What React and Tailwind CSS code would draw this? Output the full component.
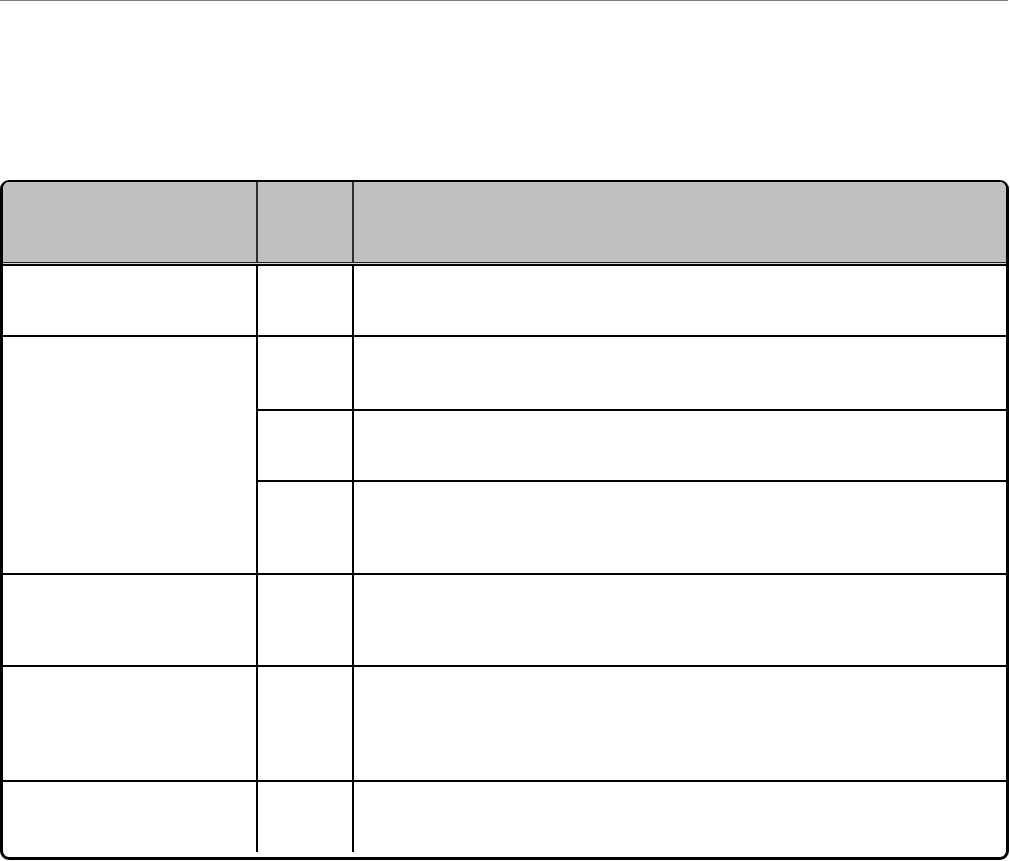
import React from 'react';

const Cell = ({ className = '' }) => <div className={`border-r-2 border-black ${className}`} />;

const App = () => {
  return (
    <div className="min-h-screen bg-white font-['Liberation_Sans',sans-serif]">
      <div className="h-px w-[1008px] bg-[#808080]" />
      <div className="mt-[179px] w-[1009px] h-[680px] border-[3px] border-t-2 border-black rounded-[9px] overflow-hidden flex flex-col">
        {/* header */}
        <div className="flex h-[80px] bg-[#c0c0c0]">
          <div className="w-[255px] shrink-0 border-r-2 border-[#303030]" />
          <div className="w-[96px] shrink-0 border-r-2 border-[#303030]" />
          <div className="flex-1" />
        </div>
        <div className="h-px bg-[#202020]" />
        <div className="h-px bg-[#d8d8d8]" />
        <div className="h-[2px] bg-black" />

        {/* body */}
        <div className="flex flex-col">
          <div className="flex h-[71px] border-b-2 border-black">
            <Cell className="w-[255px] shrink-0" />
            <Cell className="w-[96px] shrink-0" />
            <div className="flex-1" />
          </div>

          <div className="flex border-b-2 border-black">
            <Cell className="w-[255px] shrink-0" />
            <div className="flex-1 flex flex-col">
              <div className="flex h-[74px] border-b-2 border-black">
                <Cell className="w-[96px] shrink-0" />
                <div className="flex-1" />
              </div>
              <div className="flex h-[71px] border-b-2 border-black">
                <Cell className="w-[96px] shrink-0" />
                <div className="flex-1" />
              </div>
              <div className="flex h-[91px]">
                <Cell className="w-[96px] shrink-0" />
                <div className="flex-1" />
              </div>
            </div>
          </div>

          <div className="flex h-[92px] border-b-2 border-black">
            <Cell className="w-[255px] shrink-0" />
            <Cell className="w-[96px] shrink-0" />
            <div className="flex-1" />
          </div>

          <div className="flex h-[115px] border-b-2 border-black">
            <Cell className="w-[255px] shrink-0" />
            <Cell className="w-[96px] shrink-0" />
            <div className="flex-1" />
          </div>

          <div className="flex h-[70px]">
            <Cell className="w-[255px] shrink-0" />
            <Cell className="w-[96px] shrink-0" />
            <div className="flex-1" />
          </div>
        </div>
      </div>
    </div>
  );
};

export default App;
